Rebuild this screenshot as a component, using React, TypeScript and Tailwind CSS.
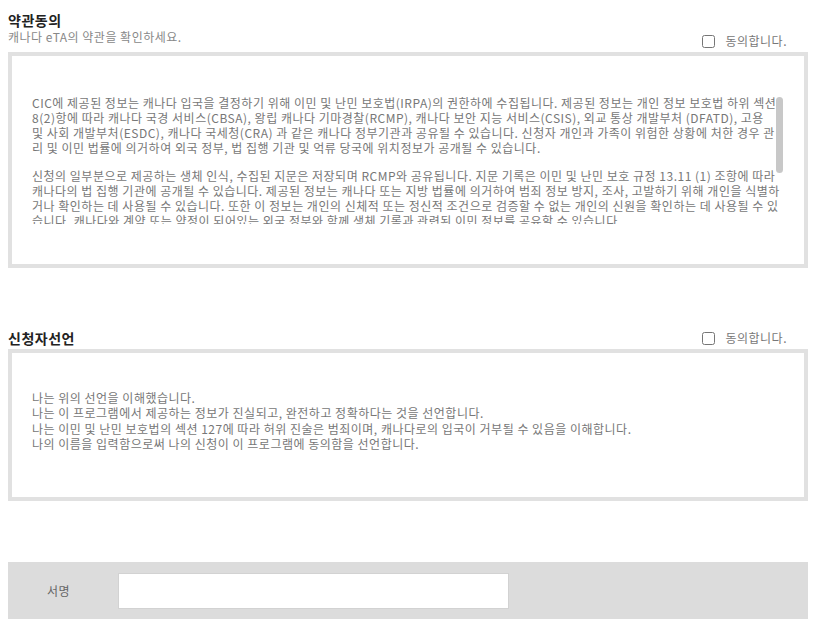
import React from 'react';

const termsParagraphs: string[][] = [
    [
        'CIC에 제공된 정보는 캐나다 입국을 결정하기 위해 이민 및 난민 보호법(IRPA)의 권한하에 수집됩니다. 제공된 정보는 개인 정보 보호법 하위 섹션',
        '8(2)항에 따라 캐나다 국경 서비스(CBSA), 왕립 캐나다 기마경찰(RCMP), 캐나다 보안 지능 서비스(CSIS), 외교 통상 개발부처 (DFATD), 고용',
        '및 사회 개발부처(ESDC), 캐나다 국세청(CRA) 과 같은 캐나다 정부기관과 공유될 수 있습니다. 신청자 개인과 가족이 위험한 상황에 처한 경우 관',
        '리 및 이민 법률에 의거하여 외국 정부, 법 집행 기관 및 억류 당국에 위치정보가 공개될 수 있습니다.',
    ],
    [
        '신청의 일부분으로 제공하는 생체 인식, 수집된 지문은 저장되며 RCMP와 공유됩니다. 지문 기록은 이민 및 난민 보호 규정 13.11 (1) 조항에 따라',
        '캐나다의 법 집행 기관에 공개될 수 있습니다. 제공된 정보는 캐나다 또는 지방 법률에 의거하여 범죄 정보 방지, 조사, 고발하기 위해 개인을 식별하',
        '거나 확인하는 데 사용될 수 있습니다. 또한 이 정보는 개인의 신체적 또는 정신적 조건으로 검증할 수 없는 개인의 신원을 확인하는 데 사용될 수 있',
        '습니다. 캐나다와 계약 또는 약정이 되어있는 외국 정부와 함께 생체 기록과 관련된 이민 정보를 공유할 수 있습니다.',
    ],
    [
        '제공된 정보는 캐나다 정부의 개인정보 처리 방침에 따라 보호되며, 관련 법률이 허용하는 범위 내에서만 사용됩니다.',
    ],
];

const declarationLines = [
    '나는 위의 선언을 이해했습니다.',
    '나는 이 프로그램에서 제공하는 정보가 진실되고, 완전하고 정확하다는 것을 선언합니다.',
    '나는 이민 및 난민 보호법의 섹션 127에 따라 허위 진술은 범죄이며, 캐나다로의 입국이 거부될 수 있음을 이해합니다.',
    '나의 이름을 입력함으로써 나의 신청이 이 프로그램에 동의함을 선언합니다.',
];

function AgreeCheck() {
    return (
        <label className="flex h-[14px] items-center pr-[21px] text-[12px] leading-[14px] text-[#777]">
            <input type="checkbox" className="m-0 h-[13px] w-[13px]" />
            <span className="ml-[10px] tracking-[0.5px]">동의합니다.</span>
        </label>
    );
}

export default function App() {
    return (
        <div className="min-h-[635px] bg-white font-['Noto_Sans_CJK_KR','Noto_Sans',sans-serif]">
            <div className="ml-2 w-[800px]">
                {/* 약관동의 */}
                <div className="flex items-end justify-between">
                    <div className="pt-3 pb-[4px]">
                        <h2 className="text-[14px] font-bold leading-[16px] tracking-[0.5px] text-[#222]">약관동의</h2>
                        <p className="mt-[2px] text-[12px] leading-[14px] tracking-[0.5px] text-[#888]">캐나다 eTA의 약관을 확인하세요.</p>
                    </div>
                    <AgreeCheck />
                </div>
                <div className="mt-1 h-[216px] border-4 border-[#e1e1e1] pt-[39px] pr-[21px] pb-[40px] pl-[20px]">
                    <div className="relative h-[129px] overflow-hidden">
                        <div className="text-[12px] leading-[15px] tracking-[0.5px] text-[#777] whitespace-nowrap">
                            {termsParagraphs.map((para, i) => (
                                <p key={i} className="mb-[13px]">
                                    {para.map((line, j) => (
                                        <span key={j} className="block">{line}</span>
                                    ))}
                                </p>
                            ))}
                        </div>
                        <div className="absolute top-[2px] right-0 h-[76px] w-[7px] rounded-full bg-[#c8c8c8]" />
                    </div>
                </div>

                {/* 신청자선언 */}
                <div className="mt-[62px] flex h-[16px] items-center justify-between">
                    <h2 className="text-[14px] font-bold leading-[16px] tracking-[0.5px] text-[#222]">신청자선언</h2>
                    <AgreeCheck />
                </div>
                <div className="mt-[3px] h-[152px] border-4 border-[#e1e1e1] pt-[37px] pl-[20px]">
                    <div className="text-[12px] leading-[15.3px] tracking-[0.5px] text-[#777] whitespace-nowrap">
                        {declarationLines.map((line, i) => (
                            <span key={i} className="block">{line}</span>
                        ))}
                    </div>
                </div>

                {/* 서명 */}
                <div className="mt-[61px] flex h-[57px] items-center bg-[#dcdcdc] pl-[39px]">
                    <span className="w-[71px] text-[12px] tracking-[0.5px] text-[#666]">서명</span>
                    <input type="text" className="h-[36px] w-[391px] border border-[#d2d2d2] bg-white px-2 text-[12px] outline-none" />
                </div>
            </div>
        </div>
    );
}
